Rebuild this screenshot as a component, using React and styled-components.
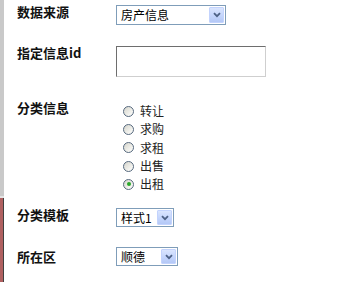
import React, { useState } from "react";
import styled, { createGlobalStyle } from "styled-components";

const GlobalStyle = createGlobalStyle`
  html, body {
    margin: 0;
    padding: 0;
    background: #ffffff;
  }
  body {
    font-family: "Noto Sans CJK SC", "Liberation Sans", sans-serif;
    color: #000000;
  }
`;

const categoryOptions = ["转让", "求购", "求租", "出售", "出租"];

const App = () => {
  const [category, setCategory] = useState("出租");

  return (
    <Page>
      <GlobalStyle />
      <Rail>
        <RailTop />
        <RailBottom />
      </Rail>
      <Form>
        <Row $top={5}>
          <Label $shift={-1}>数据来源</Label>
          <Select $width={110} $height={20}>
            <SelectText>房产信息</SelectText>
            <ArrowButton>
              <Chevron />
            </ArrowButton>
          </Select>
        </Row>

        <Row $top={21}>
          <Label $shift={-1}>指定信息id</Label>
          <TextInput type="text" />
        </Row>

        <Row $top={24}>
          <Label $shift={-1}>分类信息</Label>
          <RadioList>
            {categoryOptions.map((item) => (
              <RadioRow key={item} onClick={() => setCategory(item)}>
                <RadioCircle $checked={category === item} />
                <RadioText>{item}</RadioText>
              </RadioRow>
            ))}
          </RadioList>
        </Row>

        <Row $top={15}>
          <Label $shift={-1}>分类模板</Label>
          <Select $width={58} $height={19}>
            <SelectText>样式1</SelectText>
            <ArrowButton>
              <Chevron />
            </ArrowButton>
          </Select>
        </Row>

        <Row $top={20}>
          <Label $shift={2}>所在区</Label>
          <Select $width={62} $height={19}>
            <SelectText>顺德</SelectText>
            <ArrowButton>
              <Chevron />
            </ArrowButton>
          </Select>
        </Row>
      </Form>
    </Page>
  );
};

const Chevron = () => (
  <svg width="8" height="6" viewBox="0 0 8 6">
    <path d="M1 1.2 L4 4.2 L7 1.2" fill="none" stroke="#4d6185" strokeWidth="1.8" />
  </svg>
);

export default App;

const Page = styled.div`
  display: flex;
  width: 345px;
  height: 282px;
  overflow: hidden;
`;

const Rail = styled.div`
  display: flex;
  flex-direction: column;
  width: 4px;
  flex: none;
`;

const RailTop = styled.div`
  height: 196px;
  background: #c9c9c9;
  border-bottom: 2px solid #e4e4e4;
`;

const RailBottom = styled.div`
  flex: 1;
  background: linear-gradient(to right, #b06060 0 3px, #404040 3px 4px);
`;

const Form = styled.div`
  display: flex;
  flex-direction: column;
  padding-left: 13px;
`;

const Row = styled.div`
  display: grid;
  grid-template-columns: 99px auto;
  align-items: start;
  margin-top: ${(p) => p.$top}px;
`;

const Label = styled.div`
  margin-top: ${(p) => p.$shift}px;
  font-size: 13px;
  line-height: 16px;
  font-weight: 700;
  color: #111111;
`;

const Select = styled.div`
  box-sizing: border-box;
  display: flex;
  align-items: center;
  justify-content: space-between;
  width: ${(p) => p.$width}px;
  height: ${(p) => p.$height}px;
  padding: 1px;
  border: 1px solid #7f9db9;
  background: #ffffff;
`;

const SelectText = styled.span`
  padding-left: 3px;
  font-size: 12px;
  line-height: 14px;
  color: #000000;
`;

const ArrowButton = styled.span`
  box-sizing: border-box;
  display: flex;
  align-items: center;
  justify-content: center;
  width: 15px;
  height: 100%;
  border: 1px solid #c3d3fd;
  border-radius: 1px;
  background: linear-gradient(to bottom, #dae5fe 0%, #c4d5fc 55%, #b4c8f6 100%);
`;

const TextInput = styled.input`
  box-sizing: border-box;
  width: 150px;
  height: 31px;
  margin: 0;
  padding: 2px 4px;
  border-top: 1px solid #6e6e6e;
  border-left: 1px solid #6e6e6e;
  border-bottom: 1px solid #cfcfcf;
  border-right: 1px solid #cfcfcf;
  background: #ffffff;
  font-size: 12px;
  outline: none;
`;

const RadioList = styled.div`
  display: flex;
  flex-direction: column;
  padding-top: 1px;
`;

const RadioRow = styled.div`
  display: flex;
  align-items: center;
  gap: 6px;
  height: 18.3px;
  padding-left: 7px;
  cursor: pointer;
`;

const RadioCircle = styled.span`
  position: relative;
  box-sizing: border-box;
  width: 11px;
  height: 11px;
  border-radius: 50%;
  border: 1px solid #56697e;
  background: linear-gradient(135deg, #d4d4cc 0%, #efefea 60%, #ffffff 100%);

  &::after {
    content: "";
    position: absolute;
    left: 2.5px;
    top: 2.5px;
    width: 4px;
    height: 4px;
    border-radius: 50%;
    background: #2aa82a;
    display: ${(p) => (p.$checked ? "block" : "none")};
  }
`;

const RadioText = styled.span`
  font-size: 12px;
  line-height: 14px;
  color: #222222;
`;
